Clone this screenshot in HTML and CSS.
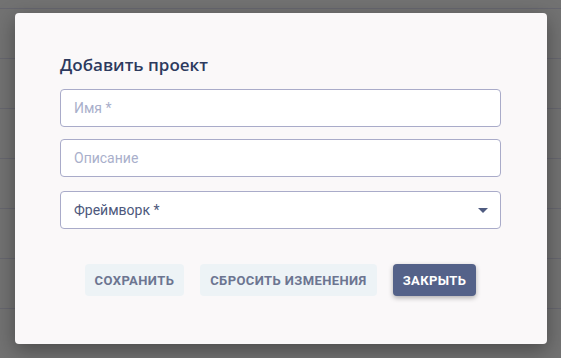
FILE: index.html
```html
<!DOCTYPE html>
<html lang="ru">
<head>
<meta charset="utf-8">
<link rel="stylesheet" href="styles.css">
</head>
<body>
<div class="backdrop">
  <div class="dialog">
    <h2 class="title">Добавить проект</h2>
    <div class="field"><input class="input" placeholder="Имя *"></div>
    <div class="field"><input class="input" placeholder="Описание"></div>
    <div class="field field-select">
      <div class="select">
        <span class="select-label">Фреймворк *</span>
        <svg class="arrow" width="10" height="5" viewBox="0 0 10 5"><path d="M0 0h10L5 5z" fill="#4f5b80"/></svg>
      </div>
    </div>
    <div class="actions">
      <button class="btn btn-light">Сохранить</button>
      <button class="btn btn-light">Сбросить изменения</button>
      <button class="btn btn-primary">Закрыть</button>
    </div>
  </div>
</div>
</body>
</html>
```
FILE: styles.css
```css
* { box-sizing: border-box; }
html, body { margin: 0; padding: 0; }
body {
  width: 561px;
  height: 358px;
  overflow: hidden;
  font-family: Roboto, "Liberation Sans", sans-serif;
}
.backdrop {
  width: 561px;
  height: 358px;
  background-color: #727272;
  background-image: repeating-linear-gradient(to bottom, transparent 0, transparent 8px, #66666f 8px, #66666f 9px, transparent 9px, transparent 50px);
  padding: 13px 14px 14px 15px;
}
.dialog {
  width: 532px;
  height: 331px;
  background: #faf8f9;
  border-radius: 4px;
  box-shadow: 0 6px 20px rgba(0,0,0,0.35);
  padding: 41px 46px 0 45px;
  display: flex;
  flex-direction: column;
}
.title {
  margin: 0;
  font-family: "Open Sans", sans-serif;
  font-weight: 600;
  font-size: 17px;
  line-height: 21px;
  color: #2d3a5e;
}
.field { margin-top: 14px; }
.field + .field { margin-top: 12px; }
.field.field-select { margin-top: 14px; }
.input, .select {
  display: block;
  width: 100%;
  height: 38px;
  border: 1px solid #a9abc9;
  border-radius: 4px;
  background: #fff;
  padding: 0 13px;
  font-family: Roboto, sans-serif;
  font-size: 14px;
  color: #4a5479;
  outline: none;
}
.input::placeholder { color: #a9afcb; }
.select {
  display: flex;
  align-items: center;
  justify-content: space-between;
  padding-right: 12px;
}
.select-label { color: #4d587c; }
.actions {
  margin-top: 35px;
  display: flex;
  justify-content: center;
  gap: 16px;
}
.btn {
  height: 32px;
  border: none;
  border-radius: 4px;
  font-family: Roboto, sans-serif;
  font-weight: 700;
  font-size: 13px;
  letter-spacing: 0.4px;
  text-transform: uppercase;
  padding: 0 10px;
  cursor: pointer;
}
.btn-light {
  background: #edf3f6;
  color: #6c7591;
}
.btn-primary {
  background: #546289;
  color: #fff;
  box-shadow: 0 2px 5px rgba(0,0,0,0.3);
}
```
